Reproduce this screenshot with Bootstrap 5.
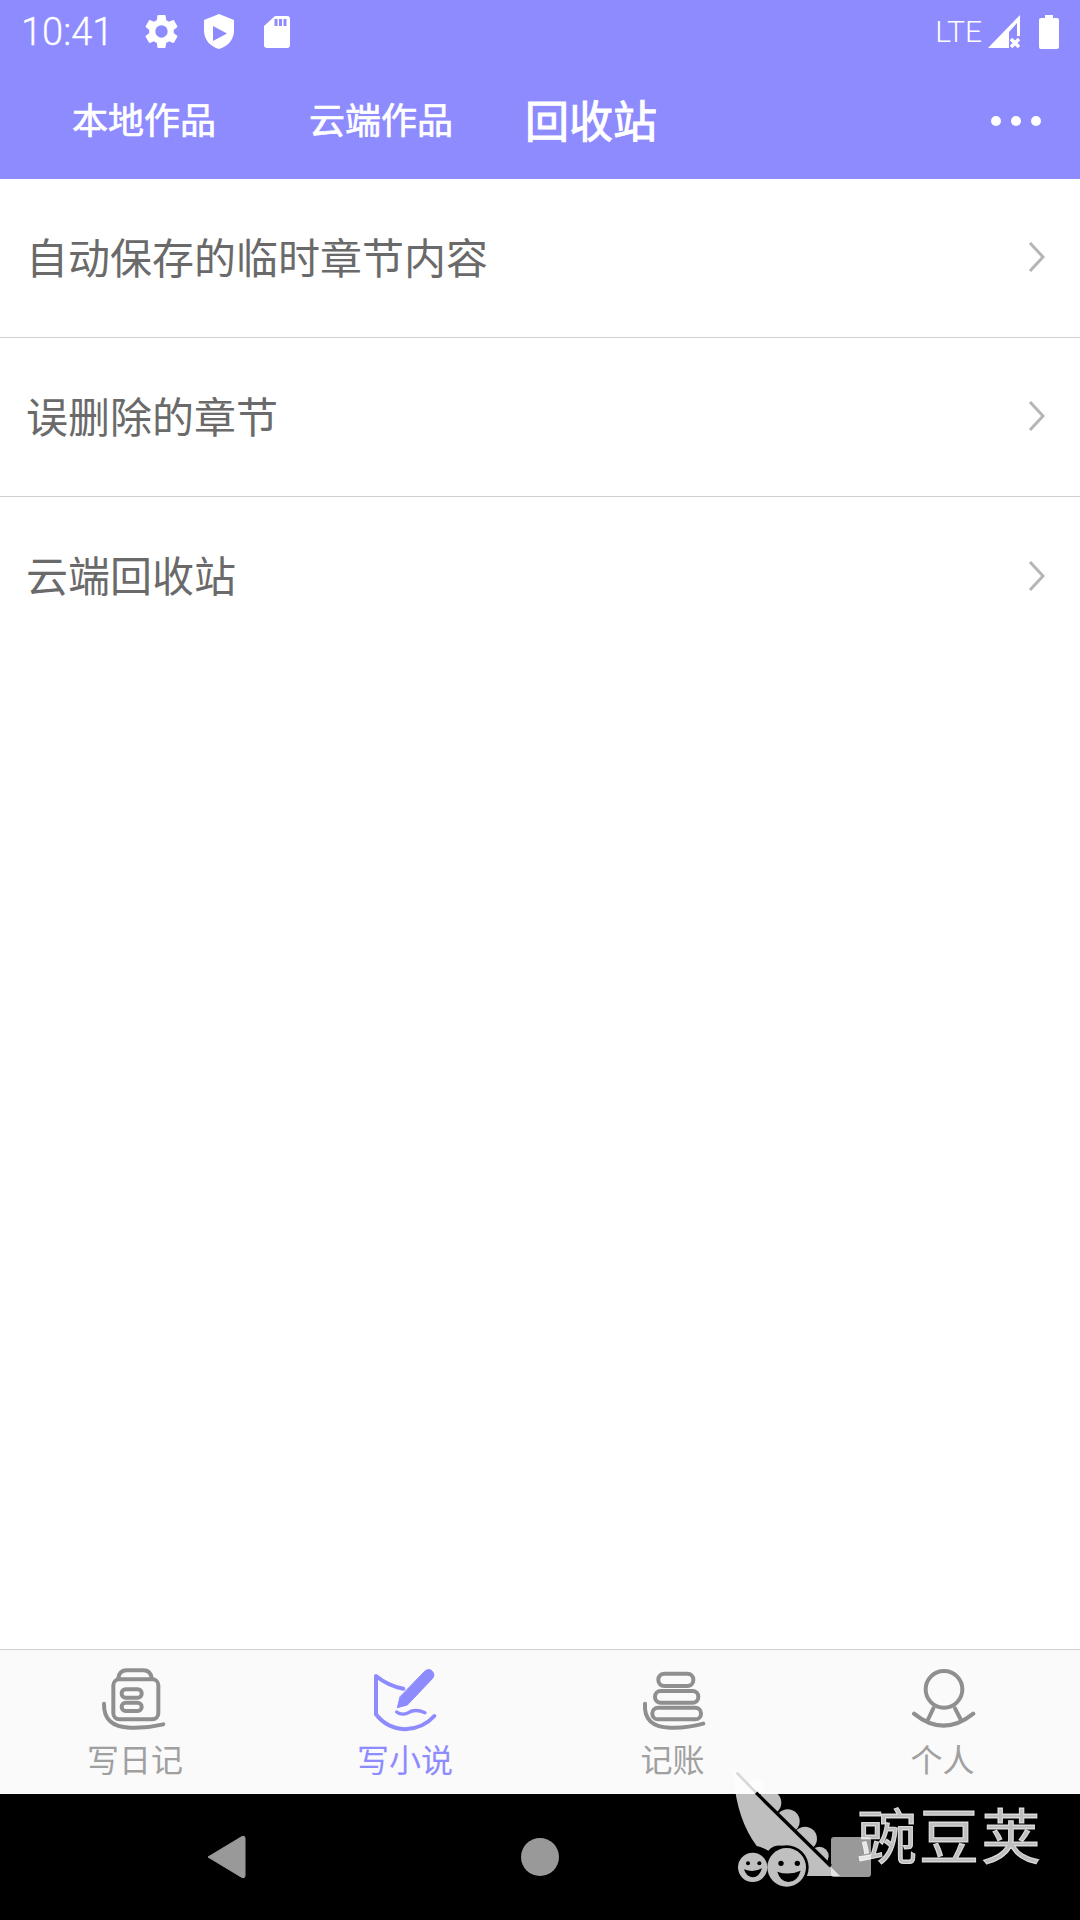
<!DOCTYPE html>
<html lang="zh-CN">
<head>
<meta charset="utf-8">
<title>回收站</title>
<link href="https://cdn.jsdelivr.net/npm/bootstrap@5.3.0/dist/css/bootstrap.min.css" rel="stylesheet">
<style>
body{margin:0;background:#fff;font-family:"Noto Sans","Noto Sans CJK SC",sans-serif}
.phone{width:1080px;height:1920px;overflow:hidden}
.app-head{background:#8e8bff;color:#fff}
.status-row{height:63px;padding:0 21px 0 21px}
.clock{font-family:Roboto,sans-serif;font-size:38px;font-weight:300;line-height:1;letter-spacing:0;margin-top:1px;-webkit-text-stroke:.3px #fff}
.gear-ico{margin-left:28px}
.shield-ico{margin-left:22px}
.sd-ico{margin-left:30px}
.lte{font-family:Roboto,sans-serif;font-size:30px;font-weight:300;line-height:1;margin-top:1px}
.sig-ico{margin-left:6px}
.bat-ico{margin-left:19px}
.tab-row{height:116px;padding:0 39px 0 72px}
.tab-row .nav-link{padding:0;color:#fff;font-size:36px;font-weight:400;line-height:1.2;-webkit-text-stroke:.7px #fff}
.tab-two{margin-left:93px}
.tab-three{margin-left:72px}
.tab-row .nav-link.active-tab{font-size:44px;-webkit-text-stroke:1px #fff}
.dot-set{gap:10px}
.dot-one{width:10px;height:10px;border-radius:50%;background:#fff}
.rows .list-group-item{height:159px;padding:0 35px 0 26px;border-color:#d0d0d0;color:#6a6a6a;font-size:42px;line-height:1.2}
.rows .list-group-item:last-child{border-bottom:0}
.row-arrow{margin-top:-2px}
.tabbar{height:145px;background:#fafafa;border-top:1px solid #d0d0d0}
.tab-cell{color:#a0a0a0;font-size:32px;line-height:1.2;padding-top:13px}
.tab-cell.on{color:#8e8bff}
.tab-cell span{margin-top:8px}
.tab-cell .two-char{margin-right:5px}
.sysbar{height:126px;background:#000;padding-left:205px}
.sys-home{width:38px;height:38px;border-radius:50%;background:#999;margin-left:274px}
.sys-recent{width:40px;height:40px;border-radius:3px;background:#999;margin-left:272px}
.mark-wrap{left:720px;top:1760px;width:340px;height:160px;pointer-events:none}
.mark-word{left:137px;top:37px;font-family:"Noto Sans CJK SC",sans-serif;font-size:60px;font-weight:400;line-height:1.2;letter-spacing:2px;-webkit-text-stroke:1px rgba(255,255,255,.75);color:rgba(255,255,255,.75);white-space:nowrap}
</style>
</head>
<body>
<div class="phone d-flex flex-column position-relative">
  <header class="app-head">
    <div class="status-row d-flex align-items-center">
      <span class="clock">10:41</span>
      <svg class="gear-ico" width="41" height="41" viewBox="0 0 24 24" fill="#fff"><path d="M19.14,12.94c.04-.3.06-.61.06-.94 0-.32-.02-.64-.07-.94l2.03-1.58a.49.49 0 0 0 .12-.61l-1.92-3.32a.488.488 0 0 0-.59-.22l-2.39.96c-.5-.38-1.03-.7-1.62-.94l-.36-2.54a.484.484 0 0 0-.48-.41h-3.84c-.24 0-.43.17-.47.41l-.36 2.54c-.59.24-1.13.57-1.62.94l-2.39-.96c-.22-.08-.47 0-.59.22L2.74 8.87c-.12.21-.08.47.12.61l2.03 1.58c-.05.3-.09.63-.09.94s.02.64.07.94l-2.03 1.58a.49.49 0 0 0-.12.61l1.92 3.32c.12.22.37.29.59.22l2.39-.96c.5.38 1.03.7 1.62.94l.36 2.54c.05.24.24.41.48.41h3.84c.24 0 .44-.17.47-.41l.36-2.54c.59-.24 1.13-.56 1.62-.94l2.39.96c.22.08.47 0 .59-.22l1.92-3.32c.12-.22.07-.47-.12-.61l-2.01-1.58zM12 15.6c-1.98 0-3.6-1.62-3.6-3.6s1.62-3.6 3.6-3.6 3.6 1.62 3.6 3.6-1.62 3.6-3.6 3.6z"/></svg>
      <svg class="shield-ico" width="30" height="35" viewBox="0 0 30 35" fill="#fff"><path fill-rule="evenodd" d="M15 0 L30 6 V17 C30 26 23 33 15 35 C7 33 0 26 0 17 V6 Z M9 12 V27 L23 19.5 Z"/></svg>
      <svg class="sd-ico" width="26" height="32" viewBox="0 0 26 32" fill="#fff"><path fill-rule="evenodd" d="M11 0 H23 Q26 0 26 3 V29 Q26 32 23 32 H3 Q0 32 0 29 V10 Z M10.500 3 V10 H13.500 V3 Z M15 3 V10 H18 V3 Z M19.500 3 V10 H22.500 V3 Z"/></svg>
      <span class="lte ms-auto">LTE</span>
      <svg class="sig-ico" width="32" height="33" viewBox="0 0 32 33" fill="#fff"><path d="M0 33 L32 0 V21 H29 V8 L21 17 V33 Z"/><path d="M23 24 L31 32 M31 24 L23 32" stroke="#fff" stroke-width="3.500"/></svg>
      <svg class="bat-ico" width="20" height="34" viewBox="0 0 20 34" fill="#fff"><path d="M6 0 H14 V3 H18 Q20 3 20 5 V32 Q20 34 18 34 H2 Q0 34 0 32 V5 Q0 3 2 3 H6 Z"/></svg>
    </div>
    <nav class="tab-row nav d-flex align-items-center">
      <a class="nav-link" href="#">本地作品</a>
      <a class="nav-link tab-two" href="#">云端作品</a>
      <a class="nav-link tab-three active-tab" href="#">回收站</a>
      <div class="dot-set d-flex ms-auto"><i class="dot-one"></i><i class="dot-one"></i><i class="dot-one"></i></div>
    </nav>
  </header>

  <main class="flex-grow-1">
    <div class="rows list-group list-group-flush">
      <a class="list-group-item d-flex align-items-center justify-content-between" href="#"><span>自动保存的临时章节内容</span>
        <svg class="row-arrow" width="17" height="30" viewBox="0 0 17 30" fill="none" stroke="#b5b5b5" stroke-width="3"><path d="M2 1 L15 15 L2 29"/></svg></a>
      <a class="list-group-item d-flex align-items-center justify-content-between" href="#"><span>误删除的章节</span>
        <svg class="row-arrow" width="17" height="30" viewBox="0 0 17 30" fill="none" stroke="#b5b5b5" stroke-width="3"><path d="M2 1 L15 15 L2 29"/></svg></a>
      <a class="list-group-item d-flex align-items-center justify-content-between" href="#"><span>云端回收站</span>
        <svg class="row-arrow" width="17" height="30" viewBox="0 0 17 30" fill="none" stroke="#b5b5b5" stroke-width="3"><path d="M2 1 L15 15 L2 29"/></svg></a>
    </div>
  </main>

  <footer class="tabbar row g-0">
    <div class="tab-cell col-3 d-flex flex-column align-items-center">
      <svg width="80" height="70" viewBox="45 36 240 210" fill="none" stroke="#8f8f8f" stroke-width="12" stroke-linecap="round"><rect x="100" y="85" width="135" height="120" rx="18"/><path d="M115 82 Q118 58 140 58 H190 Q212 58 215 82"/><rect x="125" y="115" width="60" height="25" rx="12"/><rect x="125" y="155" width="60" height="25" rx="12"/><path d="M72 158 Q70 228 150 230 Q200 232 250 220"/></svg>
      <span>写日记</span>
    </div>
    <div class="tab-cell on col-3 d-flex flex-column align-items-center">
      <svg width="80" height="70" viewBox="45 36 240 210" fill="none" stroke="#8e8bff" stroke-width="12" stroke-linecap="round" stroke-linejoin="round"><path d="M160 113 Q115 105 78 75 V190 Q110 232 165 235 Q220 232 253 195"/><path d="M225 60 Q238 50 248 62 Q256 72 248 82 L172 162 L142 170 L150 138 Z" fill="#8e8bff" stroke-width="3"/><path d="M140 183 Q155 195 175 185 Q195 172 225 185" stroke-width="10"/></svg>
      <span>写小说</span>
    </div>
    <div class="tab-cell col-3 d-flex flex-column align-items-center">
      <svg width="80" height="70" viewBox="45 36 240 210" fill="none" stroke="#8f8f8f" stroke-width="12" stroke-linecap="round"><rect x="115" y="68" width="105" height="37" rx="18"/><rect x="105" y="120" width="130" height="35" rx="17"/><rect x="97" y="170" width="146" height="35" rx="17"/><path d="M75 158 Q70 228 150 230 Q200 232 250 218"/></svg>
      <span class="two-char">记账</span>
    </div>
    <div class="tab-cell col-3 d-flex flex-column align-items-center">
      <svg width="80" height="70" viewBox="45 36 240 210" fill="none" stroke="#8f8f8f" stroke-width="12" stroke-linecap="round"><circle cx="162" cy="115" r="55"/><path d="M130 172 L112 210 M195 172 L213 207"/><path d="M72 188 Q160 260 250 188"/></svg>
      <span class="two-char">个人</span>
    </div>
  </footer>

  <div class="sysbar d-flex align-items-center">
    <svg width="42" height="44" viewBox="0 0 42 44" fill="#999"><path d="M3 22 L37 1.500 Q40 0.500 40 3 V41 Q40 43.500 37 42.500 Z" stroke="#999" stroke-width="1" stroke-linejoin="round"/></svg>
    <div class="sys-home"></div>
    <div class="sys-recent"></div>
  </div>

  <div class="mark-wrap position-absolute">
    <svg class="position-absolute top-0 start-0" width="340" height="160" viewBox="0 0 1020 480">
      <g opacity=".75" fill="#fff">
        <path d="M40 30 L360 348 H255 Q250 280 195 258 Q160 252 145 272 Q128 262 110 258 Q45 170 40 30 Z"/>
        <circle cx="108" cy="80" r="24"/><circle cx="148" cy="128" r="36"/><circle cx="203" cy="184" r="36"/><circle cx="255" cy="236" r="36"/><circle cx="298" cy="288" r="28"/>
      </g>
      <path d="M108 98 L332 318" stroke="#000" stroke-width="10" fill="none"/>
      <path d="M50 38 L108 98" stroke="#d8d8d8" stroke-width="8" fill="none"/>
      <circle cx="200" cy="322" r="66" fill="#000"/>
      <circle cx="98" cy="322" r="44" fill="#c0c0c0"/>
      <circle cx="84" cy="310" r="6" fill="#000"/><circle cx="118" cy="310" r="6" fill="#000"/>
      <path d="M72 328 Q100 340 126 325 Q118 352 98 352 Q78 350 72 328 Z" fill="#000"/>
      <circle cx="200" cy="322" r="58" fill="#c0c0c0"/>
      <circle cx="183" cy="310" r="8" fill="#000"/><circle cx="232" cy="310" r="8" fill="#000"/>
      <path d="M172 335 Q205 348 242 332 Q232 366 205 366 Q180 364 172 335 Z" fill="#000"/>
    </svg>
    <span class="mark-word position-absolute">豌豆荚</span>
  </div>
</div>
<script src="https://cdn.jsdelivr.net/npm/bootstrap@5.3.0/dist/js/bootstrap.bundle.min.js"></script>
</body>
</html>
